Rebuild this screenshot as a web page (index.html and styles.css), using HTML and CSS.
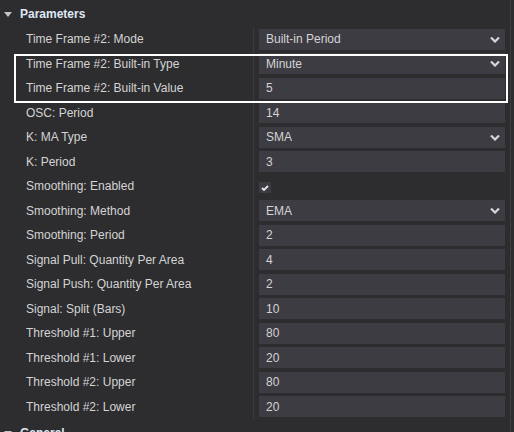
FILE: index.html
```html
<!DOCTYPE html>
<html lang="en">
<head>
  <meta charset="UTF-8">
  <title>Parameters</title>
  <link rel="stylesheet" href="styles.css">
</head>
<body>
<div class="panel">
  <div class="section-head"><span class="caret"></span>Parameters</div>
  <div class="rows">
    <div class="row">
      <div class="label">Time Frame #2: Mode</div>
      <div class="value"><div class="field select">Built-in Period<svg class="chev" width="10" height="7" viewBox="0 0 10 7"><path d="M1 1.5 L5 5.5 L9 1.5" /></svg></div></div>
    </div>
    <div class="group">
      <div class="row">
        <div class="label">Time Frame #2: Built-in Type</div>
        <div class="value"><div class="field select">Minute<svg class="chev" width="10" height="7" viewBox="0 0 10 7"><path d="M1 1.5 L5 5.5 L9 1.5" /></svg></div></div>
      </div>
      <div class="row">
        <div class="label">Time Frame #2: Built-in Value</div>
        <div class="value"><div class="field">5</div></div>
      </div>
    </div>
    <div class="row">
      <div class="label">OSC: Period</div>
      <div class="value"><div class="field">14</div></div>
    </div>
    <div class="row">
      <div class="label">K: MA Type</div>
      <div class="value"><div class="field select">SMA<svg class="chev" width="10" height="7" viewBox="0 0 10 7"><path d="M1 1.5 L5 5.5 L9 1.5" /></svg></div></div>
    </div>
    <div class="row">
      <div class="label">K: Period</div>
      <div class="value"><div class="field">3</div></div>
    </div>
    <div class="row">
      <div class="label">Smoothing: Enabled</div>
      <div class="value"><div class="check"><svg width="8" height="6" viewBox="0 0 8 6"><path d="M1 3 L3 5 L7 1" /></svg></div></div>
    </div>
    <div class="row">
      <div class="label">Smoothing: Method</div>
      <div class="value"><div class="field select">EMA<svg class="chev" width="10" height="7" viewBox="0 0 10 7"><path d="M1 1.5 L5 5.5 L9 1.5" /></svg></div></div>
    </div>
    <div class="row">
      <div class="label">Smoothing: Period</div>
      <div class="value"><div class="field">2</div></div>
    </div>
    <div class="row">
      <div class="label">Signal Pull: Quantity Per Area</div>
      <div class="value"><div class="field">4</div></div>
    </div>
    <div class="row">
      <div class="label">Signal Push: Quantity Per Area</div>
      <div class="value"><div class="field">2</div></div>
    </div>
    <div class="row">
      <div class="label">Signal: Split (Bars)</div>
      <div class="value"><div class="field">10</div></div>
    </div>
    <div class="row">
      <div class="label">Threshold #1: Upper</div>
      <div class="value"><div class="field">80</div></div>
    </div>
    <div class="row">
      <div class="label">Threshold #1: Lower</div>
      <div class="value"><div class="field">20</div></div>
    </div>
    <div class="row">
      <div class="label">Threshold #2: Upper</div>
      <div class="value"><div class="field">80</div></div>
    </div>
    <div class="row">
      <div class="label">Threshold #2: Lower</div>
      <div class="value"><div class="field">20</div></div>
    </div>
  </div>
  <div class="section-head"><span class="caret"></span>General</div>
</div>
</body>
</html>
```

FILE: styles.css
```css
html, body {
  margin: 0;
  padding: 0;
  background: #2d2d2f;
  height: 100%;
  overflow: hidden;
}
body {
  font-family: 'Liberation Sans', Arial, sans-serif;
  font-size: 12px;
  color: #d4d4d4;
}
.panel {
  width: 510px;
  min-height: 100%;
  border-right: 1px solid #3e3e41;
}
.section-head {
  height: 27px;
  display: flex;
  align-items: center;
  padding-left: 4px;
  font-weight: bold;
  color: #dfe7f3;
}
.caret {
  width: 0;
  height: 0;
  border-left: 4px solid transparent;
  border-right: 4px solid transparent;
  border-top: 5px solid #c4c4c4;
  margin: 1px 8px 0 0;
}
.row {
  height: 24.5px;
  display: flex;
}
.label {
  width: 227px;
  padding-left: 26px;
  border-right: 1px solid #3b3b3e;
  display: flex;
  align-items: center;
  white-space: nowrap;
}
.value {
  flex: 1;
  padding: 0 5px;
  display: flex;
  align-items: center;
}
.field {
  flex: 1;
  height: 21px;
  background: #3d3c43;
  display: flex;
  align-items: center;
  justify-content: space-between;
  padding: 0 5px 0 7px;
}
.chev path {
  fill: none;
  stroke: #d6d6d6;
  stroke-width: 2.2;
}
.check {
  width: 12px;
  height: 11px;
  background: #3d3c43;
  display: flex;
  align-items: center;
  justify-content: center;
  margin-top: 3px;
}
.check path {
  fill: none;
  stroke: #e8e8e8;
  stroke-width: 1.8;
}
.group {
  position: relative;
}
.group::after {
  content: '';
  position: absolute;
  left: 14px;
  right: 2px;
  top: 2px;
  bottom: -2px;
  border: 2px solid #ffffff;
  pointer-events: none;
}
```
